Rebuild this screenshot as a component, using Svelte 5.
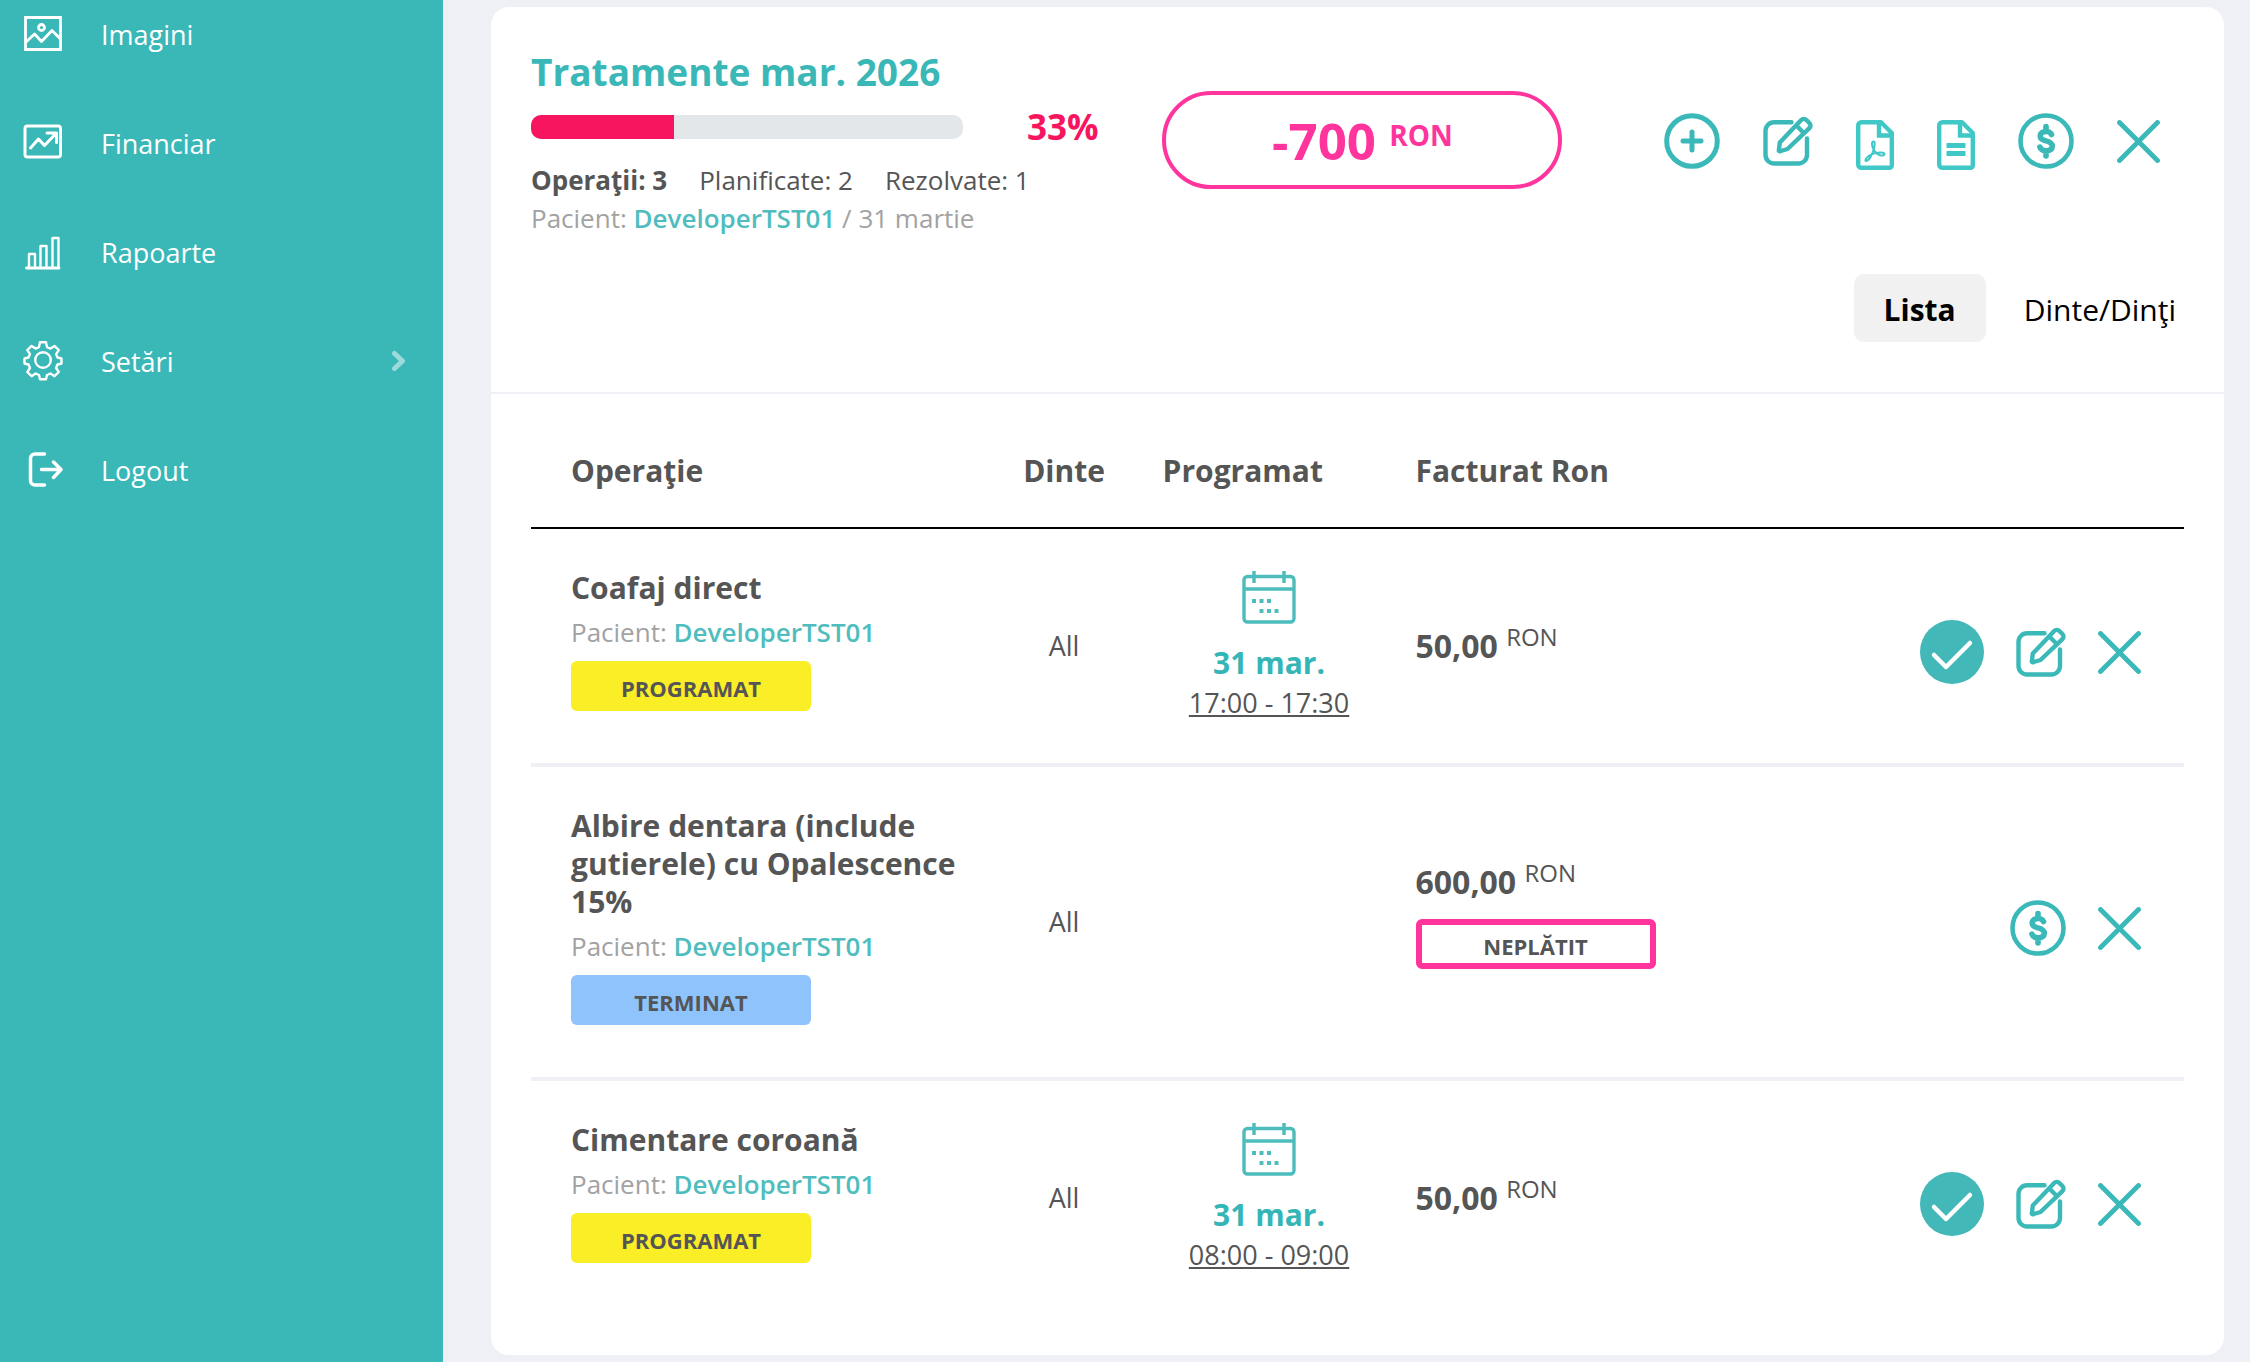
<script lang="ts">
  type Action = 'check' | 'add' | 'edit' | 'pdf' | 'doc' | 'pay' | 'close';

  interface Operation {
    name: string;
    patient: string;
    status: string;
    tone: 'planned' | 'done';
    tooth: string;
    date?: string;
    time?: string;
    price: string;
    unpaid?: boolean;
    actions: Action[];
  }

  const nav = [
    { label: 'Imagini', icon: 'image' },
    { label: 'Financiar', icon: 'trend' },
    { label: 'Rapoarte', icon: 'bars' },
    { label: 'Setări', icon: 'gear', expandable: true },
    { label: 'Logout', icon: 'logout' },
  ];

  const labels: Record<Action, string> = {
    check: 'Finalizează',
    add: 'Adaugă',
    edit: 'Editează',
    pdf: 'Export PDF',
    doc: 'Document',
    pay: 'Plată',
    close: 'Șterge',
  };

  const headerActions: Action[] = ['add', 'edit', 'pdf', 'doc', 'pay', 'close'];

  const operations: Operation[] = [
    {
      name: 'Coafaj direct',
      patient: 'DeveloperTST01',
      status: 'PROGRAMAT',
      tone: 'planned',
      tooth: 'All',
      date: '31 mar.',
      time: '17:00 - 17:30',
      price: '50,00',
      actions: ['check', 'edit', 'close'],
    },
    {
      name: 'Albire dentara (include gutierele) cu Opalescence 15%',
      patient: 'DeveloperTST01',
      status: 'TERMINAT',
      tone: 'done',
      tooth: 'All',
      price: '600,00',
      unpaid: true,
      actions: ['pay', 'close'],
    },
    {
      name: 'Cimentare coroană',
      patient: 'DeveloperTST01',
      status: 'PROGRAMAT',
      tone: 'planned',
      tooth: 'All',
      date: '31 mar.',
      time: '08:00 - 09:00',
      price: '50,00',
      actions: ['check', 'edit', 'close'],
    },
  ];

  const progress = 33;
  let view = $state('list');
</script>

{#snippet navIcon(name: string)}
  <svg width="40" height="40" viewBox="0 0 40 40" fill="none" stroke="#fff" stroke-width="2.8" stroke-linecap="round" stroke-linejoin="round" aria-hidden="true">
    {#if name === 'image'}
      <path d="M2.5 3.5h35v32h-35z" stroke-linejoin="miter" />
      <circle cx="18.5" cy="13.5" r="3" />
      <path d="M3 28l8.5-8 7 7.5L29 16.500l8.500 8.500" />
    {:else if name === 'trend'}
      <rect x="2" y="3" width="35.500" height="31" rx="2.500" stroke-width="3" />
      <path d="M7.500 25l8-9 6 6.500L33 10.500M24 10h9.500v9.500" stroke-width="3" />
    {:else if name === 'bars'}
      <path d="M3.500 36h32.500" />
      <path d="M6 36V22h6v14M17.500 36V14h6v22M29.500 36V6h6v30" stroke-width="2.400" />
    {:else if name === 'gear'}
      <circle cx="20" cy="19" r="7.800" stroke-width="2.400" />
      <path stroke-width="2.400" d="M17 1.300h6l1 4.800 3.500 1.500 4-2.700 4.300 4.200-2.700 4 1.400 3.400 4 1v5l-4 1-1.400 3.500 2.700 4-4.300 4.200-4-2.700-3.500 1.500-1 4.200h-6l-1-4.200-3.400-1.500-4 2.700-4.300-4.200 2.700-4-1.500-3.500-4-1v-5l4-1 1.500-3.400-2.700-4 4.300-4.200 4 2.700L16 6.100z" />
    {:else}
      <path d="M21.500 4H12a4.500 4.500 0 0 0-4.500 4.500v22A4.500 4.500 0 0 0 12 35h9.500M18.500 19.500H38M30.500 12l7.500 7.500-7.500 8" stroke-width="3.500" />
    {/if}
  </svg>
{/snippet}

{#snippet actionIcon(name: Action)}
  {#if name === 'check'}
    <svg width="64" height="64" viewBox="0 0 64 64" fill="none" aria-hidden="true">
      <circle cx="32" cy="32" r="32" fill="#43b8b9" />
      <path d="M14 35l12 12 24-24" stroke="#fff" stroke-width="4.500" stroke-linecap="round" stroke-linejoin="round" />
    </svg>
  {:else if name === 'add'}
    <svg width="56" height="56" viewBox="0 0 56 56" fill="none" stroke="#3bb8b8" stroke-width="5" stroke-linecap="round" aria-hidden="true">
      <circle cx="28" cy="28" r="25.300" />
      <path d="M28 19v18M19 28h18" />
    </svg>
  {:else if name === 'edit'}
    <svg width="50" height="50" viewBox="0 0 50 50" fill="none" stroke="#3bb8b8" stroke-width="4.400" stroke-linecap="round" stroke-linejoin="round" aria-hidden="true">
      <path d="M28.500 6.200H11a8.500 8.500 0 0 0-8.500 8.500V39a8.500 8.500 0 0 0 8.500 8.500h24.500A8.500 8.500 0 0 0 44 39V22.500" />
      <path d="M15.800 34.700l1-8.200L38.200 4a3.600 3.600 0 0 1 5.200 0l3 3a3.600 3.600 0 0 1 0 5.200L24.500 33l-6.700 2a1.700 1.700 0 0 1-2-.300zM33.300 9.500l7.500 7.500" />
    </svg>
  {:else if name === 'pdf' || name === 'doc'}
    <svg width="38" height="58" viewBox="0 -2 38 58" fill="none" stroke="#40c8c6" stroke-width="4.400" stroke-linejoin="round" aria-hidden="true">
      <path d="M5.500 8.200H25L35.800 19v32.500a2.300 2.300 0 0 1-2.300 2.300h-28a3.300 3.300 0 0 1-3.300-3.300v-39a3.300 3.300 0 0 1 3.300-3.300z" />
      <path d="M23 8.500V21.500h12.500" stroke-linejoin="miter" />
      {#if name === 'pdf'}
        <path stroke-width="2" d="M17.500 27.500c-2.300 0-1.600 4.500-.200 7.200 1.900 3.700 4.800 6.300 7.700 6.800 4.500.600 4.800-3 .500-3-5 0-10.500 1.500-13.500 4-2.800 2.300-3 4.500-2 4.500 2.900 0 6.200-6.500 7.700-11.500 1.100-3.800 1.500-8-.200-8z" />
      {:else}
        <path d="M9.500 31.500h19M9.500 39.500h19" stroke-width="5" />
      {/if}
    </svg>
  {:else if name === 'pay'}
    <svg width="56" height="56" viewBox="0 0 56 56" fill="none" stroke="#3bb8b8" stroke-width="4.600" stroke-linecap="round" aria-hidden="true">
      <circle cx="28" cy="28" r="25.500" />
      <path stroke-width="5.600" d="M33.500 21.500c-1-2-3-3-5.500-3-3.500 0-5.800 1.800-5.800 4.500 0 3 2.300 4 5.800 4.900 4 1.100 6.300 2.200 6.300 5.300 0 3-2.600 4.600-6.300 4.600-3.100 0-5.300-1.300-6.100-3.600M28 13.500v4M28 39v4" />
    </svg>
  {:else}
    <svg width="43" height="43" viewBox="0 0 43 43" fill="none" stroke="#3bb8b8" stroke-width="4.800" stroke-linecap="round" aria-hidden="true">
      <path d="M2.500 2.500l38 38M40.500 2.500l-38 38" />
    </svg>
  {/if}
{/snippet}

{#snippet actionButton(name: Action)}
  <button type="button" class="icon-btn" aria-label={labels[name]}>{@render actionIcon(name)}</button>
{/snippet}

<div class="layout">
  <nav class="sidebar">
    {#each nav as item}
      <a href="#{item.icon}" class="nav-item">
        {@render navIcon(item.icon)}
        <span>{item.label}</span>
        {#if item.expandable}
          <svg class="chevron" width="16" height="22" viewBox="0 0 16 22" fill="none" stroke="#9ddbdb" stroke-width="5" stroke-linecap="round" stroke-linejoin="round" aria-hidden="true">
            <path d="M3.500 3.500l8 7.500-8 7.500" />
          </svg>
        {/if}
      </a>
    {/each}
  </nav>

  <main class="content">
    <section class="card">
      <header class="head">
        <div class="summary">
          <div class="info">
            <h1>Tratamente mar. 2026</h1>
            <div class="progress">
              <div class="track"><div class="fill" style="width: {progress}%"></div></div>
              <span class="percent">{progress}%</span>
            </div>
            <div class="counts">
              <b>Operaţii: 3</b>
              <span>Planificate: 2</span>
              <span>Rezolvate: 1</span>
            </div>
            <div class="patient">Pacient: <a href="#patient">DeveloperTST01</a> / 31 martie</div>
          </div>
          <div class="balance">-700 <sup>RON</sup></div>
          <div class="head-actions">
            {#each headerActions as name}
              {@render actionButton(name)}
            {/each}
          </div>
        </div>
        <div class="tabs">
          <button type="button" class:active={view === 'list'} onclick={() => (view = 'list')}>Lista</button>
          <button type="button" class:active={view === 'teeth'} onclick={() => (view = 'teeth')}>Dinte/Dinţi</button>
        </div>
      </header>

      <div class="table-wrap">
        <table>
          <thead>
            <tr>
              <th class="col-name">Operaţie</th>
              <th class="col-tooth">Dinte</th>
              <th class="col-date">Programat</th>
              <th class="col-price">Facturat Ron</th>
              <th></th>
            </tr>
          </thead>
          <tbody>
            {#each operations as op}
              <tr>
                <td class="col-name">
                  <div class="name">{op.name}</div>
                  <div class="patient">Pacient: <a href="#patient">{op.patient}</a></div>
                  <div class="badge {op.tone}">{op.status}</div>
                </td>
                <td class="col-tooth">{op.tooth}</td>
                <td class="col-date">
                  {#if op.date}
                    <svg width="54" height="54" viewBox="0 0 54 54" fill="none" stroke="#4dbcbc" stroke-width="3.400" aria-hidden="true">
                      <rect x="2" y="6.500" width="50" height="45.500" rx="3.500" />
                      <path d="M2 19h50M12 1v12M42 1v12" />
                      <path d="M10 31h4M17.500 31h4M25 31h4M17.500 41h4M25 41h4M32.500 41h4" stroke-width="4" />
                    </svg>
                    <div class="date">{op.date}</div>
                    <div class="time">{op.time}</div>
                  {/if}
                </td>
                <td class="col-price">
                  <div class="price">{op.price} <sup>RON</sup></div>
                  {#if op.unpaid}
                    <div class="badge unpaid">NEPLĂTIT</div>
                  {/if}
                </td>
                <td class="col-actions">
                  <div class="row-actions">
                    {#each op.actions as name}
                      {@render actionButton(name)}
                    {/each}
                  </div>
                </td>
              </tr>
            {/each}
          </tbody>
        </table>
      </div>
    </section>
  </main>
</div>

<style>
  :global(body) {
    background: #eff0f5;
  }
  .layout {
    display: flex;
    min-height: 100vh;
    color: #555;
    font-family: 'Open Sans', 'Noto Sans', sans-serif;
    font-size: 27px;
    line-height: 38px;
  }
  .layout * {
    box-sizing: border-box;
  }

  .sidebar {
    flex: 0 0 443px;
    display: flex;
    flex-direction: column;
    gap: 39px;
    background: #3ab7b7;
  }
  .nav-item {
    display: flex;
    align-items: center;
    height: 70px;
    padding: 0 36px 0 23px;
    color: #fff;
    text-decoration: none;
  }
  .nav-item svg {
    margin-bottom: 3px;
  }
  .nav-item span {
    margin-left: 38px;
  }
  .nav-item .chevron {
    margin-left: auto;
  }

  .content {
    flex: 1;
    min-width: 0;
    padding: 7px 26px 5px 48px;
  }
  .card {
    background: #fff;
    border-radius: 18px;
  }

  .head {
    padding: 40px 40px 50px;
    border-bottom: 2px solid #eff0f5;
  }
  .summary {
    display: grid;
    grid-template-columns: 38.2% 400px 1fr;
  }
  h1 {
    margin: 0;
    color: #3ab7b7;
    font-size: 37px;
    font-weight: 700;
    line-height: 50px;
  }
  .progress {
    display: flex;
    align-items: center;
    gap: 64px;
    height: 60px;
  }
  .track {
    flex: 0 0 432px;
    height: 24px;
    border-radius: 10px;
    background: #e3e7ea;
    overflow: hidden;
  }
  .fill {
    height: 100%;
    background: #f8155f;
  }
  .percent {
    color: #f8155f;
    font-size: 35px;
    font-weight: 700;
  }
  .counts {
    display: flex;
    gap: 32px;
    margin-top: 4px;
    font-size: 26px;
  }
  .patient {
    color: #a2a2a2;
    font-size: 26px;
  }
  .patient a {
    color: #4fbdbe;
    font-weight: 600;
    text-decoration: none;
  }
  .balance {
    height: 98px;
    margin-top: 44px;
    border: 4px solid #ff359d;
    border-radius: 49px;
    color: #ff359d;
    font-size: 51px;
    font-weight: 700;
    line-height: 90px;
    text-align: center;
  }
  .balance sup {
    font-size: 28px;
    line-height: 0;
    vertical-align: 14px;
  }
  .head-actions {
    display: flex;
    align-items: center;
    justify-content: flex-end;
    gap: 43px;
    height: 56px;
    margin-top: 66px;
    padding-right: 24px;
  }
  .icon-btn {
    display: block;
    padding: 0;
    border: 0;
    background: none;
    cursor: pointer;
  }
  .icon-btn svg {
    display: block;
  }

  .tabs {
    display: flex;
    justify-content: flex-end;
    gap: 8px;
    margin-top: 37px;
    margin-right: -22px;
  }
  .tabs button {
    height: 68px;
    padding: 3px 30px 0;
    border: 0;
    border-radius: 10px;
    background: none;
    color: #000;
    font: inherit;
    font-size: 30px;
    cursor: pointer;
  }
  .tabs button.active {
    background: #f1f1f1;
    font-weight: 700;
  }

  .table-wrap {
    padding: 20px 40px 40px;
  }
  table {
    width: 100%;
    border-collapse: separate;
    border-spacing: 0;
    table-layout: fixed;
  }
  th {
    height: 115px;
    padding: 0 20px;
    border-bottom: 2px solid #000;
    font-size: 30px;
    font-weight: 700;
    text-align: left;
  }
  td {
    padding: 40px 20px;
  }
  tr:not(:last-child) td {
    border-bottom: 4px solid #eff0f5;
  }
  .col-name {
    width: 27.5%;
    padding-right: 10px;
    padding-left: 40px;
  }
  .col-tooth {
    width: 9.5%;
    text-align: center;
  }
  .col-date {
    width: 15.3%;
  }
  .col-price {
    width: 20%;
  }
  td.col-date {
    text-align: center;
  }
  td.col-actions {
    padding: 52px 43px 40px;
  }
  .name {
    margin-bottom: 6px;
    font-size: 30px;
    font-weight: 700;
  }
  .badge {
    width: 240px;
    height: 50px;
    margin: 10px 0 12px;
    border-radius: 6px;
    font-size: 22px;
    font-weight: 700;
    line-height: 54px;
    text-align: center;
  }
  .planned {
    background: #faee27;
  }
  .done {
    background: #8ec3fb;
  }
  .unpaid {
    margin-top: 18px;
    border: 6px solid #ff359d;
    line-height: 42px;
  }
  td.col-date svg {
    display: block;
    margin: 0 auto;
  }
  .date {
    margin-top: 20px;
    color: #34b5b6;
    font-size: 30px;
    font-weight: 700;
  }
  .time {
    margin-top: 2px;
    text-decoration: underline;
  }
  .price {
    font-size: 32px;
    font-weight: 700;
  }
  .price sup {
    font-size: 24px;
    font-weight: 400;
    line-height: 0;
    vertical-align: 12px;
  }
  .row-actions {
    display: flex;
    align-items: center;
    justify-content: flex-end;
    gap: 32px;
  }
</style>
